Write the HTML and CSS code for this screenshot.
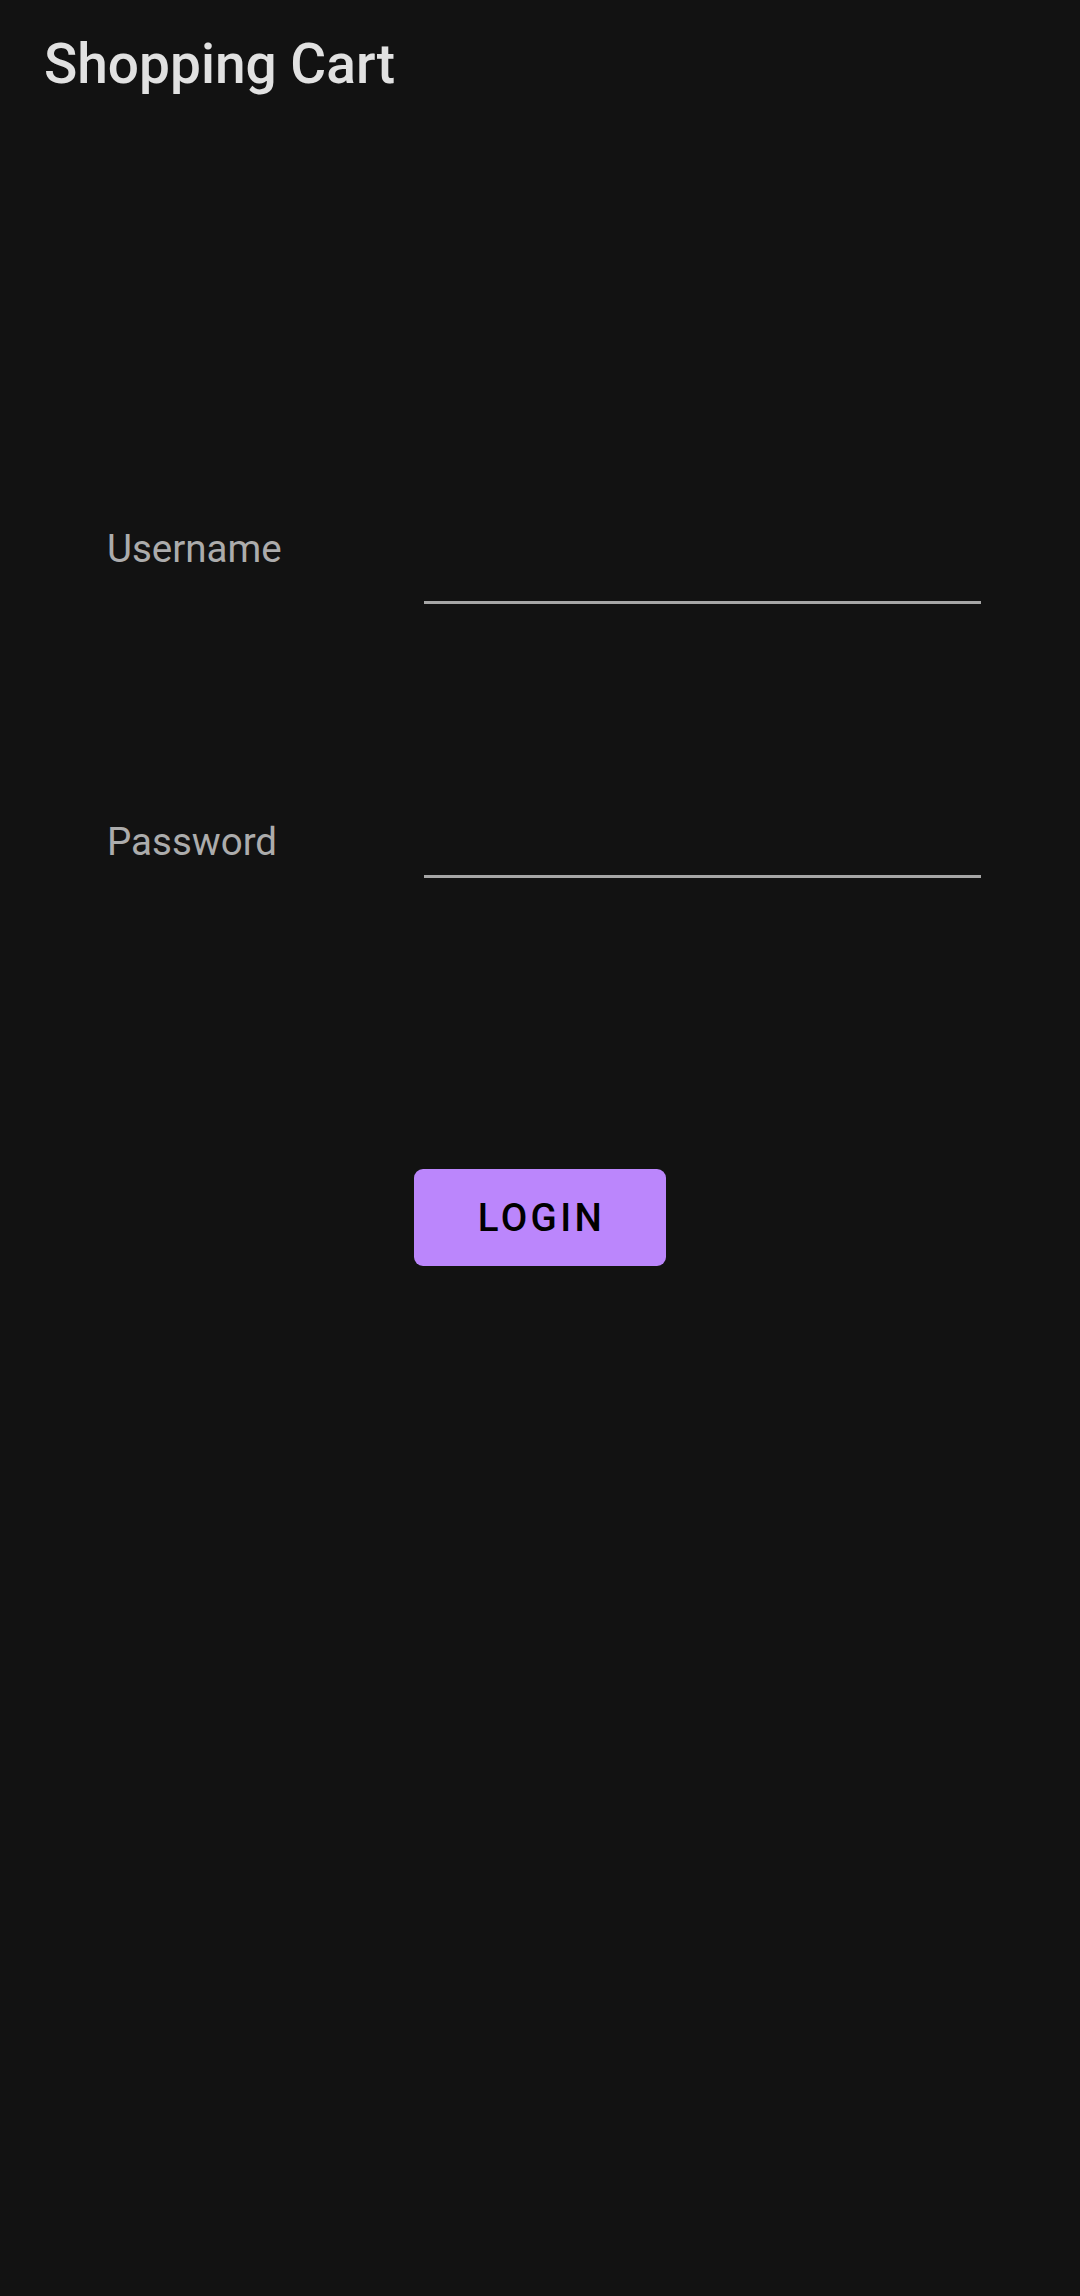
FILE: index.html
```html
<!DOCTYPE html>
<html>
<head>
<meta charset="utf-8">
<link rel="stylesheet" href="styles.css">
</head>
<body>
<header class="toolbar">
  <h1 class="title">Shopping Cart</h1>
</header>
<main class="form">
  <div class="row row-user">
    <label class="label">Username</label>
    <div class="field field-user"></div>
  </div>
  <div class="row row-pass">
    <label class="label">Password</label>
    <div class="field field-pass"></div>
  </div>
  <div class="actions">
    <button class="btn">LOGIN</button>
  </div>
</main>
</body>
</html>
```
FILE: styles.css
```css
html, body {
  margin: 0;
  padding: 0;
  background: #121212;
  width: 1080px;
  height: 2296px;
  font-family: Roboto, "Noto Sans", sans-serif;
}
.toolbar {
  height: 154px;
  box-sizing: border-box;
  padding: 32px 0 0 44px;
}
.title {
  margin: 0;
  font-size: 55px;
  line-height: 64px;
  font-weight: 500;
  color: #e1e1e1;
}
.form {
  margin: 372px 0 0 107px;
  width: 874px;
}
.row {
  display: flex;
  align-items: flex-start;
}
.label {
  width: 317px;
  font-size: 38.5px;
  line-height: 45px;
  color: #acacac;
}
.field {
  flex: 1;
  border-bottom: 3px solid #a6a6a6;
}
.field-user { height: 75px; }
.row-pass { margin-top: 215px; }
.field-pass { height: 56px; }
.actions {
  display: flex;
  justify-content: center;
  margin: 291px 0 0 -107px;
  width: 1080px;
}
.btn {
  width: 252px;
  height: 97px;
  border: none;
  border-radius: 9px;
  background: #bb86fc;
  color: #000;
  font-family: Roboto, "Noto Sans", sans-serif;
  font-size: 38.5px;
  font-weight: 500;
  letter-spacing: 3.4px;
  padding: 0 0 0 3px;
}
```
